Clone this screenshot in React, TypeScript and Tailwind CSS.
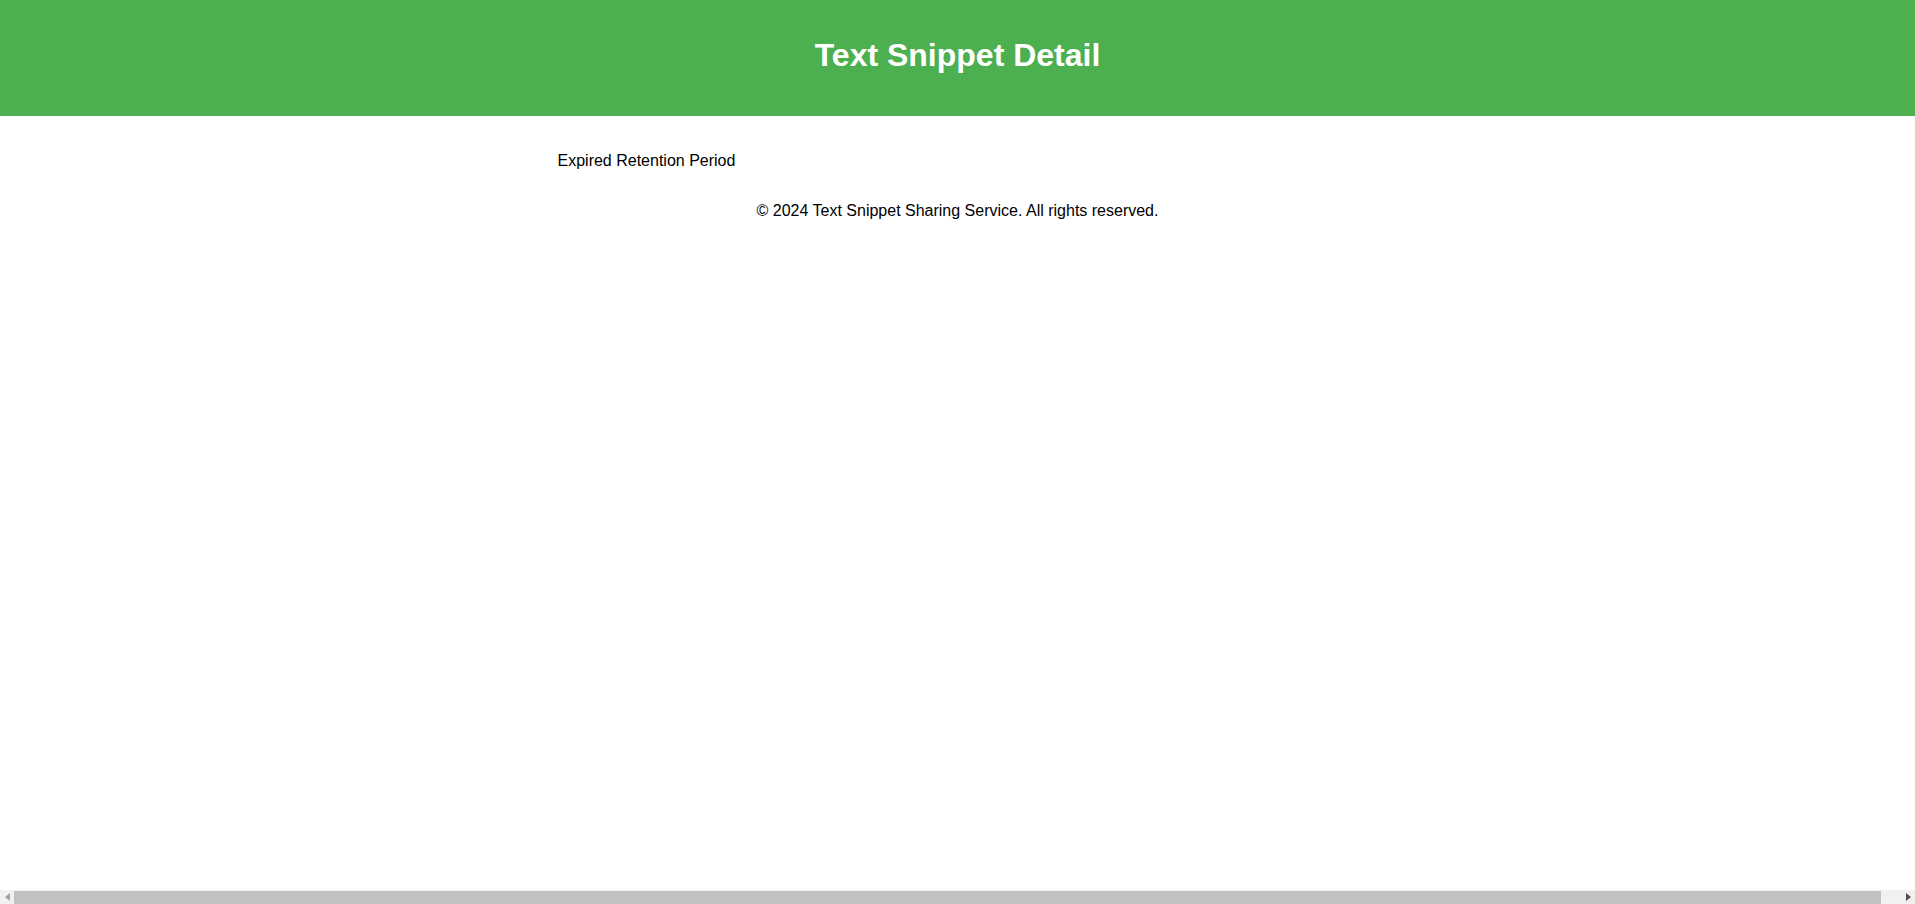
export default function App() {
  return (
    <div className="font-['Liberation_Sans',Arial,sans-serif] text-black">
      <header className="w-full h-[116px] bg-[#4caf50] pt-[37px] text-center">
        <h1 className="text-[32px] leading-[37px] font-bold text-white">Text Snippet Detail</h1>
      </header>
      <main className="w-full">
        <div className="w-[800px] mx-auto pt-[36px]">
          <p className="text-[16px] leading-[18px]">Expired Retention Period</p>
        </div>
        <footer className="pt-[32px] text-center text-[16px] leading-[18px]">
          © 2024 Text Snippet Sharing Service. All rights reserved.
        </footer>
      </main>
      <div className="fixed bottom-0 left-0 right-0 h-[14px] bg-[#f1f1f1] flex">
        <div className="w-[14px] h-full flex items-center justify-center">
          <svg width="5" height="8" viewBox="0 0 5 8"><polygon points="5,0 5,8 0,4" fill="#a3a3a3" /></svg>
        </div>
        <div className="flex-1 mt-[1px] mr-[20px] bg-[#c1c1c1]" />
        <div className="w-[14px] h-full flex items-center justify-center">
          <svg width="5" height="8" viewBox="0 0 5 8"><polygon points="0,0 0,8 5,4" fill="#505050" /></svg>
        </div>
      </div>
    </div>
  );
}
